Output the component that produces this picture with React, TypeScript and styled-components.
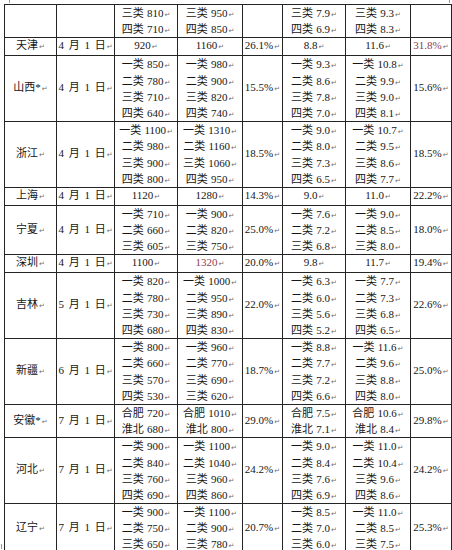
import React from "react";
import styled, { createGlobalStyle } from "styled-components";

const Global = createGlobalStyle`
  html, body { margin: 0; padding: 0; background: #ffffff; }
  body { font-family: "Liberation Serif", "Noto Sans CJK SC", serif; }
`;

const Page = styled.div`
  position: relative;
  width: 452px;
  height: 550px;
  overflow: hidden;
  background: #fff;
  padding: 4px 0 0 4px;
  box-sizing: border-box;
`;

const Corner = styled.div<{ $top?: number; $left?: number; $w: number; $h: number }>`
  position: absolute;
  top: ${(p) => p.$top ?? 0}px;
  left: ${(p) => p.$left ?? 0}px;
  width: ${(p) => p.$w}px;
  height: ${(p) => p.$h}px;
  background: #9a9a9a;
`;

const Table = styled.table`
  border-collapse: collapse;
  table-layout: fixed;
  width: 447px;
  font-family: "Liberation Serif", "Noto Sans CJK SC", serif;
  font-size: 11px;
  color: #161616;
`;

const Cell = styled.td<{ $red?: boolean; $wide?: boolean }>`
  border: 1px solid #242424;
  padding: 0;
  text-align: center;
  vertical-align: middle;
  line-height: 15px;
  white-space: nowrap;
  overflow: visible;
  word-spacing: ${(p) => (p.$wide ? "2px" : "0.5px")};
  color: ${(p) => (p.$red ? "#8e3b52" : "#161616")};
`;

const Line = styled.div`
  height: 16.2px;
  line-height: 16.2px;
`;

const Mark = styled.span`
  font-family: "DejaVu Sans", sans-serif;
  font-size: 7px;
  color: #6e6e6e;
  margin-left: 1px;
  word-spacing: 0;
`;

type V = string | string[];
type Row = {
  p: string;
  d: string;
  a: V;
  b: V;
  r1: string;
  c: V;
  e: V;
  r2: string;
  redB?: boolean;
  redR2?: boolean;
};

const rows: Row[] = [
  { p: "", d: "", a: ["三类 810", "四类 710"], b: ["三类 950", "四类 850"], r1: "", c: ["三类 7.9", "四类 6.9"], e: ["三类 9.3", "四类 8.3"], r2: "" },
  { p: "天津", d: "4 月 1 日", a: "920", b: "1160", r1: "26.1%", c: "8.8", e: "11.6", r2: "31.8%", redR2: true },
  { p: "山西*", d: "4 月 1 日", a: ["一类 850", "二类 780", "三类 710", "四类 640"], b: ["一类 980", "二类 900", "三类 820", "四类 740"], r1: "15.5%", c: ["一类 9.3", "二类 8.6", "三类 7.8", "四类 7.0"], e: ["一类 10.8", "二类 9.9", "三类 9.0", "四类 8.1"], r2: "15.6%" },
  { p: "浙江", d: "4 月 1 日", a: ["一类 1100", "二类 980", "三类 900", "四类 800"], b: ["一类 1310", "二类 1160", "三类 1060", "四类 950"], r1: "18.5%", c: ["一类 9.0", "二类 8.0", "三类 7.3", "四类 6.5"], e: ["一类 10.7", "二类 9.5", "三类 8.6", "四类 7.7"], r2: "18.5%" },
  { p: "上海", d: "4 月 1 日", a: "1120", b: "1280", r1: "14.3%", c: "9.0", e: "11.0", r2: "22.2%" },
  { p: "宁夏", d: "4 月 1 日", a: ["一类 710", "二类 660", "三类 605"], b: ["一类 900", "二类 820", "三类 750"], r1: "25.0%", c: ["一类 7.6", "二类 7.2", "三类 6.8"], e: ["一类 9.0", "二类 8.5", "三类 8.0"], r2: "18.0%" },
  { p: "深圳", d: "4 月 1 日", a: "1100", b: "1320", r1: "20.0%", c: "9.8", e: "11.7", r2: "19.4%", redB: true },
  { p: "吉林", d: "5 月 1 日", a: ["一类 820", "二类 780", "三类 730", "四类 680"], b: ["一类 1000", "二类 950", "三类 890", "四类 830"], r1: "22.0%", c: ["一类 6.3", "二类 6.0", "三类 5.6", "四类 5.2"], e: ["一类 7.7", "二类 7.3", "三类 6.8", "四类 6.5"], r2: "22.6%" },
  { p: "新疆", d: "6 月 1 日", a: ["一类 800", "二类 660", "三类 570", "四类 530"], b: ["一类 960", "二类 770", "三类 690", "三类 620"], r1: "18.7%", c: ["一类 8.8", "二类 7.7", "三类 7.2", "四类 6.6"], e: ["一类 11.6", "二类 9.6", "三类 8.8", "四类 8.0"], r2: "25.0%" },
  { p: "安徽*", d: "7 月 1 日", a: ["合肥 720", "淮北 680"], b: ["合肥 1010", "淮北 800"], r1: "29.0%", c: ["合肥 7.5", "淮北 7.1"], e: ["合肥 10.6", "淮北 8.4"], r2: "29.8%" },
  { p: "河北", d: "7 月 1 日", a: ["一类 900", "二类 840", "三类 760", "四类 690"], b: ["一类 1100", "二类 1040", "三类 960", "四类 860"], r1: "24.2%", c: ["一类 9.0", "二类 8.4", "三类 7.6", "四类 6.9"], e: ["一类 11.0", "二类 10.4", "三类 9.6", "四类 8.6"], r2: "24.2%" },
  { p: "辽宁", d: "7 月 1 日", a: ["一类 900", "二类 750", "三类 650"], b: ["一类 1100", "二类 900", "三类 780"], r1: "20.7%", c: ["一类 8.5", "二类 7.0", "三类 6.0"], e: ["一类 11.0", "二类 8.5", "三类 7.5"], r2: "25.3%" },
];

const widths = [52, 58, 63, 65, 40, 63, 65, 41];

function Text({ t }: { t: string }) {
  if (!t) return null;
  return (
    <>
      {t}
      <Mark>↵</Mark>
    </>
  );
}

function Value({ v, red, wide }: { v: V; red?: boolean; wide?: boolean }) {
  if (Array.isArray(v)) {
    return (
      <Cell $red={red} $wide={wide}>
        {v.map((s, i) => (
          <Line key={i}>
            <Text t={s} />
          </Line>
        ))}
      </Cell>
    );
  }
  return (
    <Cell $red={red} $wide={wide}>
      <Text t={v} />
    </Cell>
  );
}

export default function App() {
  return (
    <>
      <Global />
      <Page>
        <Corner $left={9} $w={1} $h={3} />
        <Corner $left={449} $w={1} $h={3} />
        <Corner $top={544} $left={1} $w={1} $h={5} />
        <Table>
          <colgroup>
            {widths.map((w, i) => (
              <col key={i} style={{ width: w }} />
            ))}
          </colgroup>
          <tbody>
            {rows.map((r, i) => (
              <tr key={i}>
                <Value v={r.p} />
                <Value v={r.d} wide />
                <Value v={r.a} />
                <Value v={r.b} red={r.redB} />
                <Value v={r.r1} />
                <Value v={r.c} />
                <Value v={r.e} />
                <Value v={r.r2} red={r.redR2} />
              </tr>
            ))}
          </tbody>
        </Table>
      </Page>
    </>
  );
}
